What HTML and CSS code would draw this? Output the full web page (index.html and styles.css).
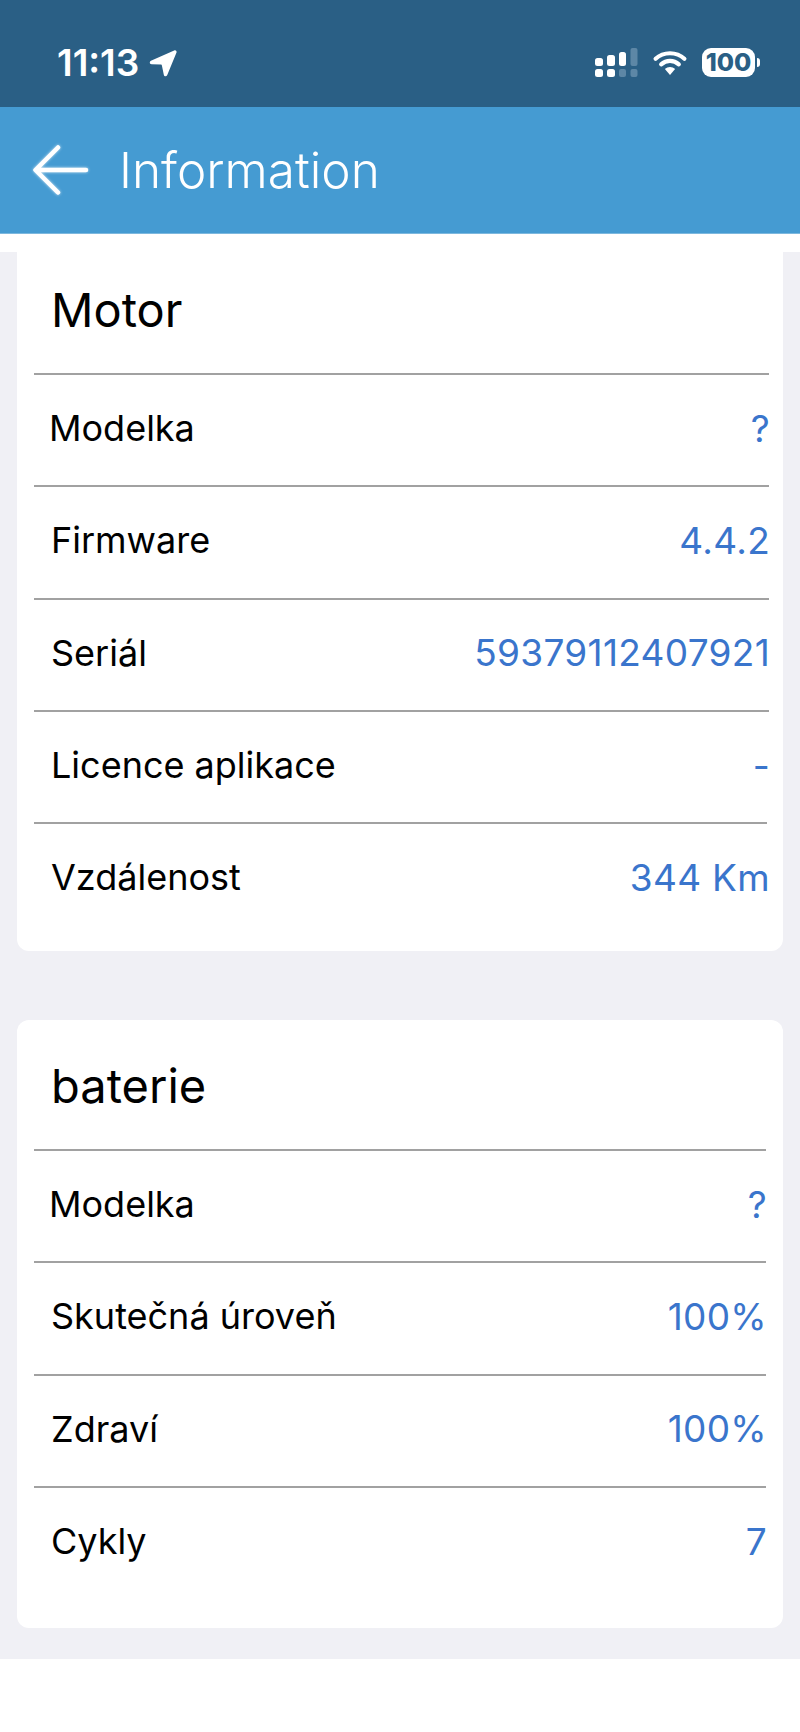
FILE: index.html
```html
<!DOCTYPE html>
<html lang="cs">
<head>
    <meta charset="UTF-8">
    <meta name="viewport" content="width=device-width, initial-scale=1.0">
    <title>Information</title>
    <link rel="stylesheet" href="styles.css">
</head>
<body>
    <div class="status-bar">
        <div class="status-left">
            <span class="clock">11:13</span>
            <svg class="location" width="29" height="28" viewBox="0 0 30 30"><path d="M27.500 1.600 2.600 12.700c-2 .9-1.400 3.500.7 3.600l9.700.4c.8 0 1.300.5 1.400 1.200l2 9.600c.4 2 2.800 2.300 3.700.4L29.900 4.100c.7-1.800-.7-3.300-2.400-2.500z" fill="#fff"/></svg>
        </div>
        <div class="status-right">
            <svg class="signal" width="43" height="29" viewBox="0 0 43 29">
                <rect x="0" y="10" width="8" height="8" rx="2.500" fill="#fff"/>
                <rect x="12" y="7" width="8" height="11" rx="2.500" fill="#fff"/>
                <rect x="24" y="4" width="7" height="14" rx="2.500" fill="#fff"/>
                <rect x="35.500" y="0" width="7" height="18" rx="2" fill="#5d87a6"/>
                <rect x="0" y="21" width="8" height="8" rx="2.500" fill="#fff"/>
                <rect x="12" y="21" width="8" height="8" rx="2.500" fill="#fff"/>
                <rect x="24" y="21" width="7" height="8" rx="2" fill="#5d87a6"/>
                <rect x="35.500" y="21" width="7" height="8" rx="2" fill="#5d87a6"/>
            </svg>
            <svg class="wifi" width="36" height="26" viewBox="0 0 36 28">
                <path d="M2.500 9.500C11 1.500 25 1.500 33.500 9.500" fill="none" stroke="#fff" stroke-width="4.500" stroke-linecap="round"/>
                <path d="M8.500 15.500c5.500-5 13.500-5 19 0" fill="none" stroke="#fff" stroke-width="4.500" stroke-linecap="round"/>
                <path d="M12.500 20.500c3-3 8-3 11 0L18 27z" fill="#fff"/>
            </svg>
            <div class="battery">
                <span class="battery-level">100</span>
                <span class="battery-cap"></span>
            </div>
        </div>
    </div>

    <header class="app-bar">
        <svg class="back" width="60" height="60" viewBox="0 0 60 60">
            <path d="M56 30H6M28 7.500 5.500 30 28 52.500" fill="none" stroke="#fff" stroke-width="4.500" stroke-linecap="round" stroke-linejoin="round"/>
        </svg>
        <h1 class="app-title">Information</h1>
    </header>

    <main class="page">
        <section class="card card-motor">
            <h2 class="card-title">Motor</h2>
            <div class="row row-nudge"><span class="label">Modelka</span><span class="value">?</span></div>
            <div class="row"><span class="label">Firmware</span><span class="value">4.4.2</span></div>
            <div class="row"><span class="label">Seriál</span><span class="value">59379112407921</span></div>
            <div class="row"><span class="label">Licence aplikace</span><span class="value">-</span></div>
            <div class="row row-short"><span class="label">Vzdálenost</span><span class="value">344 Km</span></div>
        </section>

        <section class="card card-battery">
            <h2 class="card-title">baterie</h2>
            <div class="row row-nudge"><span class="label">Modelka</span><span class="value">?</span></div>
            <div class="row"><span class="label">Skutečná úroveň</span><span class="value">100%</span></div>
            <div class="row"><span class="label">Zdraví</span><span class="value">100%</span></div>
            <div class="row"><span class="label">Cykly</span><span class="value">7</span></div>
        </section>
    </main>
</body>
</html>
```

FILE: styles.css
```css
* {
    margin: 0;
    padding: 0;
    box-sizing: border-box;
}

html, body {
    height: 100%;
    background: #fff;
    font-family: Inter, "Liberation Sans", sans-serif;
    overflow: hidden;
}

.status-bar {
    height: 107px;
    background: #2a5f85;
    padding: 18px 40px 0 57px;
    display: flex;
    align-items: center;
    justify-content: space-between;
    color: #fff;
}

.status-left {
    display: flex;
    align-items: center;
    gap: 9px;
}

.clock {
    font-size: 37px;
    font-weight: 600;
}

.status-right {
    display: flex;
    align-items: center;
}

.wifi {
    margin-left: 14px;
}

.battery {
    display: flex;
    align-items: center;
    margin-left: 14px;
}

.battery-level {
    width: 53px;
    height: 29px;
    border-radius: 9px;
    background: #fff;
    color: #2a5f85;
    font-size: 25px;
    font-weight: 800;
    line-height: 29px;
    text-align: center;
}

.battery-cap {
    width: 3px;
    height: 9px;
    margin-left: 2px;
    border-radius: 0 3px 3px 0;
    background: #fff;
}

.app-bar {
    height: 127px;
    background: #459bd2;
    border-bottom: 1px solid #7db8de;
    padding-left: 30px;
    display: flex;
    align-items: center;
    gap: 29px;
}

.back {
    filter: drop-shadow(0 0 1.500px rgba(255, 255, 255, 0.7));
}

.app-title {
    font-size: 49.500px;
    font-weight: 300;
    color: #fff;
}

.page {
    margin-top: 18px;
    height: 1407px;
    background: #f0f0f5;
    padding: 0 17px;
    display: flex;
    flex-direction: column;
    gap: 69px;
}

.card {
    background: #fff;
    border-radius: 0 0 12px 12px;
    padding: 0 14px 0 17px;
}

.card-motor {
    height: 699px;
}

.card-battery {
    height: 608px;
    border-radius: 12px;
    padding-right: 17px;
}

.card-motor .card-title {
    height: 121px;
    padding-top: 28px;
}

.card-title {
    height: 129px;
    padding: 36px 0 0 17px;
    font-size: 47px;
    font-weight: 400;
    line-height: 60px;
    color: #000;
}

.row {
    height: 112.300px;
    border-top: 2px solid #a1a1a1;
    padding-bottom: 4px;
    display: flex;
    align-items: center;
    justify-content: space-between;
    font-size: 36px;
}

.row-short {
    border-image: linear-gradient(to right, #a1a1a1 732px, transparent 732px) 1;
}

.label {
    color: #000;
    padding-left: 17px;
}

.row-nudge .label {
    padding-left: 15px;
}

.value {
    color: #3a75cc;
    font-size: 37px;
    letter-spacing: 0.3px;
    margin-right: -1px;
}
```
